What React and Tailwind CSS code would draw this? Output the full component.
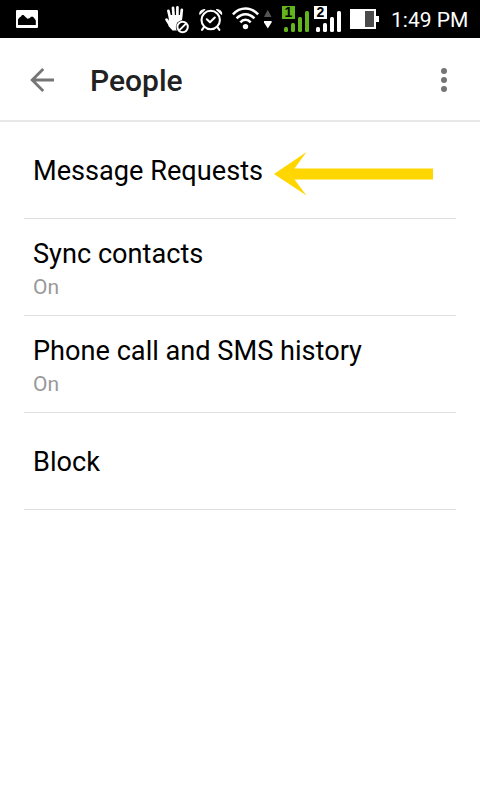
const PhotoIcon = () => (
  <svg width="22" height="18" viewBox="16 10 22 18">
    <rect x="16" y="10" width="22" height="18" rx="1" fill="#fff" />
    <path d="M18 25V19.5L19.5 17.5L21 16.5L22 15L23.5 15L25.5 17L27.5 18.8L29.5 18.2L31 16.8H33L34.5 18.5L35.8 20.5V25Z" fill="#000" />
  </svg>
);

const HandIcon = () => (
  <svg width="26" height="30" viewBox="164 5 26 30" fill="none" strokeLinecap="round" strokeLinejoin="round">
    <g stroke="#fff" strokeWidth="2.7">
      <path d="M170.3 19L168.4 10.8" />
      <path d="M173.8 18L173 7.8" />
      <path d="M177.4 18V7.4" />
      <path d="M180.8 19L181.8 9.8" />
      <path d="M170 25L166.5 19.6" />
    </g>
    <path d="M169 15H182.2L181.5 24L177 30.5H172.5L168.5 26Z" fill="#fff" />
    <circle cx="182.6" cy="27" r="6.8" fill="#000" />
    <circle cx="182.6" cy="27" r="5.2" stroke="#fff" strokeWidth="2" />
    <path d="M179.7 29.9L185.5 24.1" stroke="#fff" strokeWidth="2" />
  </svg>
);

const AlarmIcon = () => (
  <svg width="26" height="26" viewBox="198 7 26 26" fill="none" stroke="#fff" strokeWidth="2.1" strokeLinecap="round" strokeLinejoin="round">
    <circle cx="210.7" cy="20" r="9.2" />
    <path d="M206.8 19.3L210 22.3L214.8 17.6" />
    <path d="M199.7 14.2C199.8 11.5 201.8 9.6 204.8 9.5Z" fill="#fff" strokeWidth="1.2" />
    <path d="M221.7 14.2C221.6 11.5 219.6 9.6 216.6 9.5Z" fill="#fff" strokeWidth="1.2" />
    <path d="M203.8 27.4L202 29.8M217.6 27.4L219.4 29.8" />
  </svg>
);

const WifiIcon = () => (
  <svg width="28" height="24" viewBox="232 6 28 24" fill="none" stroke="#fff" strokeWidth="2.5">
    <path d="M232.9 14.4C240.2 6.6 250.8 6.6 258.1 14.4" />
    <path d="M236.6 18.4C241.8 12.8 249.2 12.8 254.4 18.4" />
    <path d="M240.3 22.3C243.4 18.9 247.6 18.9 250.7 22.3" />
    <circle cx="245.5" cy="26.6" r="2.7" fill="#fff" stroke="none" />
  </svg>
);

const TransferIcon = () => (
  <svg width="8" height="20" viewBox="264 9 8 20">
    <path d="M267.7 9.7L271.6 17H264Z" fill="#555" />
    <path d="M264 21H271.6V22.5L267.8 28.5L264 22.5Z" fill="#fff" />
  </svg>
);

const SignalIcon = ({ sim, color }) => (
  <svg className="overflow-visible" width="28" height="27" viewBox="0 0 28 27" fill={color}>
    <rect x="0" y="0" width="13" height="13" />
    <text x="6.5" y="11.3" textAnchor="middle" fontSize="14" fontWeight="700" fontFamily="Liberation Sans, sans-serif" fill="#000">
      {sim}
    </text>
    <rect x="2" y="21" width="4" height="5" rx="1.5" />
    <rect x="9" y="17" width="4" height="9" rx="1.5" />
    <rect x="16" y="11" width="4" height="15" rx="1.5" />
    <rect x="23" y="5" width="4" height="21" rx="1.5" />
  </svg>
);

const BatteryIcon = () => (
  <svg width="29" height="20" viewBox="0 0 29 20">
    <path d="M0 0H26V7H29V13H26V20H0Z" fill="#fff" />
    <rect x="15" y="2" width="9" height="16" fill="#4b4b4b" />
  </svg>
);

const StatusBar = () => (
  <div className="flex h-[38px] items-start bg-black pl-4 text-white">
    <div className="mt-2.5">
      <PhotoIcon />
    </div>
    <div className="mt-[5px] ml-[126px]">
      <HandIcon />
    </div>
    <div className="mt-[7px] ml-2">
      <AlarmIcon />
    </div>
    <div className="mt-1.5 ml-2">
      <WifiIcon />
    </div>
    <div className="mt-[9px] ml-1">
      <TransferIcon />
    </div>
    <div className="mt-1.5 ml-2.5">
      <SignalIcon sim="1" color="#62b51c" />
    </div>
    <div className="mt-1.5 ml-1">
      <SignalIcon sim="2" color="#fff" />
    </div>
    <div className="mt-[9px] ml-2">
      <BatteryIcon />
    </div>
    <span className="mt-1 ml-3 text-[21px] leading-8 whitespace-nowrap">1:49 PM</span>
  </div>
);

const Header = () => (
  <header className="flex h-[84px] items-center border-b-2 border-[#e8e8e8] pt-0.5 pr-[33px] pl-[30px]">
    <svg width="25" height="24" viewBox="0 0 25 24" fill="none" stroke="#757575" strokeWidth="2.8">
      <path d="M24 12H2M13.2 1L2.2 12L13.2 23" />
    </svg>
    <h1 className="mt-0.5 ml-[35px] grow text-[30px] leading-9 font-medium text-[#212121]">People</h1>
    <svg width="6" height="24" viewBox="0 0 6 24" fill="#757575">
      <circle cx="3" cy="3" r="3" />
      <circle cx="3" cy="12" r="3" />
      <circle cx="3" cy="21" r="3" />
    </svg>
  </header>
);

const SettingRow = ({ title, value, children }) => (
  <li className={`flex h-[97px] flex-col justify-center border-b border-[#e0e0e0] pl-[9px] ${value ? "pt-1" : "pt-px"}`}>
    <div className="flex items-center">
      <span className="text-[27.15px] leading-8 whitespace-nowrap">{title}</span>
      {children}
    </div>
    {value && <span className="mt-[3px] text-[21px] leading-7 text-[#999]">{value}</span>}
  </li>
);

const PointerArrow = () => (
  <svg className="mt-1.5 ml-[11px] shrink-0" width="160" height="44" viewBox="0 0 160 44">
    <path d="M0 22L32.5 0L20.5 16.5H159V27.5H20.5L32.5 43.5Z" fill="#ffd600" />
  </svg>
);

export default function App() {
  return (
    <div className="h-[800px] w-[480px] overflow-hidden bg-white font-[Roboto,sans-serif] text-black">
      <StatusBar />
      <Header />
      <ul className="mx-6">
        <SettingRow title="Message Requests">
          <PointerArrow />
        </SettingRow>
        <SettingRow title="Sync contacts" value="On" />
        <SettingRow title="Phone call and SMS history" value="On" />
        <SettingRow title="Block" />
      </ul>
    </div>
  );
}
